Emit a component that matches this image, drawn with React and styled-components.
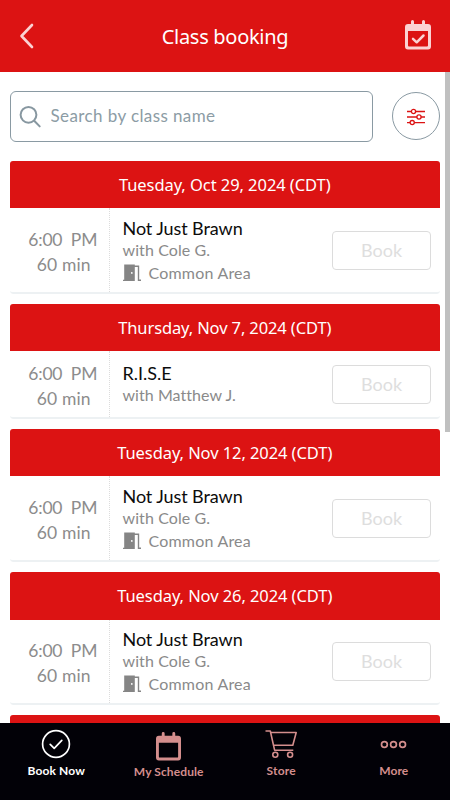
import React from "react";
import styled, { createGlobalStyle } from "styled-components";

const Global = createGlobalStyle`
  * { box-sizing: border-box; }
  html, body { margin: 0; overflow: hidden; background: #fff; }
  body { font-family: Lato, "Liberation Sans", sans-serif; }
  button, input { font-family: inherit; margin: 0; }
`;
const Screen = styled.div`
  width: 450px; height: 800px; display: flex; flex-direction: column; overflow: hidden; background: #fff;
`;
const TopBar = styled.header`
  height: 72px; flex: none; background: #dc1313; color: #fff;
  display: grid; grid-template-columns: 72px 1fr 72px; align-items: center;
`;
const Title = styled.h1`
  margin: 0; padding-top: 1px; text-align: center; font: 400 20px/28px "Noto Sans", sans-serif;
  letter-spacing: ${p => p.$track}px; white-space: nowrap;
`;
const IconButton = styled.button`
  border: 0; padding: 0; background: none; color: #fbd2d3; height: 72px; display: flex; align-items: center;
  justify-content: ${p => p.$end ? "flex-end" : "flex-start"};
  padding-left: ${p => p.$end ? 0 : 19}px; padding-right: ${p => p.$end ? 19 : 0}px; padding-bottom: ${p => p.$end ? 2 : 0}px;
`;
const Main = styled.main`
  flex: 1; min-height: 0; display: flex; overflow: hidden;
`;
const Content = styled.div`
  flex: none; width: 445px; padding: 19px 5px 0 9.5px;
`;
const ScrollThumb = styled.div`
  width: 5px; height: 360px; background: #c0c0c0;
`;
const SearchRow = styled.div`
  display: flex; align-items: center; justify-content: space-between; height: 51px; margin-bottom: 18.7px; width: 430.9px;
`;
const SearchBox = styled.label`
  width: 363.4px; height: 51px; border: 1px solid #8a9aa3; border-radius: 6px; display: flex; align-items: center;
  padding-left: 8px; color: #8797a0; gap: 9px;
`;
const SearchInput = styled.input`
  border: 0; outline: 0; background: none; padding: 0 0 2px; width: 280px; height: 30px; font-size: 17px; letter-spacing: 0.4px;
  &::placeholder { color: #8c9ca5; opacity: 1; }
`;
const FilterButton = styled.button`
  width: 48px; height: 48px; border-radius: 50%; border: 1px solid #8a9aa3; background: #fff; padding: 1px 0 0;
  display: flex; align-items: center; justify-content: center; color: #dc1313; margin-bottom: 1px;
`;
const Card = styled.section`
  width: 430.5px; margin-bottom: 10px; border-radius: 3px; overflow: hidden;
`;
const DateBar = styled.h2`
  margin: 0; height: 47.5px; background: #dc1313; color: #fff; text-align: center;
  font: 400 16.5px/48px "Noto Sans", sans-serif; letter-spacing: ${p => p.$track}px; white-space: nowrap;
`;
const ClassRow = styled.div`
  height: ${p => p.$short ? 67.3 : 85.8}px; display: flex; border-bottom: 2px solid #edf1f3; border-radius: 0 0 3px 3px;
`;
const TimeCell = styled.div`
  width: 100.5px; flex: none; border-right: 1px dotted #dcdcdc; display: flex; flex-direction: column;
  justify-content: center; padding-left: 7px; color: #8c8c8c; font-size: 17.5px; line-height: 25.5px;
  text-align: center; white-space: pre; padding-top: 4px;
`;
const Time = styled.span`letter-spacing: -0.2px;`;
const Duration = styled.span`letter-spacing: 0.15px; padding-left: 2px;`;
const Details = styled.div`
  flex: 1; padding-left: 12.5px; display: flex; flex-direction: column; justify-content: center; white-space: nowrap; padding-top: 1px;
`;
const ClassName = styled.div`
  color: #0c0c0c; font-size: 18px; line-height: 22px; letter-spacing: ${p => p.$track}px;
`;
const Meta = styled.div`
  color: #8a8a8a; font-size: 16px; line-height: 22.5px; display: flex; align-items: center; gap: 8px; letter-spacing: ${p => p.$track}px;
`;
const BookCell = styled.div`
  width: 108px; flex: none; display: flex; align-items: center;
`;
const BookButton = styled.button`
  width: 99px; height: 39px; border: 1px solid #dcdcdc; border-radius: 4px; background: #fff;
  color: #dedede; padding: 0; font-size: 18px; letter-spacing: 0;
`;
const TabBar = styled.nav`
  height: 77px; flex: none; background: #020107; display: grid; grid-template-columns: repeat(4, 1fr);
`;
const Tab = styled.button`
  border: 0; background: none; padding: 0; color: ${p => p.$active ? "#fff" : "#d48e8d"};
  display: flex; flex-direction: column; align-items: center; padding-top: ${p => p.$drop ? 6 : 5}px;
  font-size: 12px; font-weight: 700; line-height: 17px; letter-spacing: ${p => p.$track}px; white-space: nowrap;
`;
const TabIcon = styled.span`
  height: 34px; display: flex; align-items: center; justify-content: center; padding-bottom: ${p => p.$lift || 0}px;
`;

const BackIcon = () => (
  <svg width="16" height="26" viewBox="0 0 16 26" fill="none" stroke="currentColor" strokeWidth="2.6" strokeLinecap="round" strokeLinejoin="round">
    <path d="M13 2 2.5 13 13 24" />
  </svg>
);
const CalendarIcon = ({ check, width = 26, height = 30 }) => (
  <svg width={width} height={height} viewBox="0 0 26 30" preserveAspectRatio="none">
    <path fill="currentColor" fillRule="evenodd" d="M6 1.5a1.5 1.5 0 0 1 3 0V4h8V1.5a1.5 1.5 0 0 1 3 0V4h3a3 3 0 0 1 3 3v19.5a3 3 0 0 1-3 3H3a3 3 0 0 1-3-3V7a3 3 0 0 1 3-3h3ZM3 11v14.5q0 1 1 1h18q1 0 1-1V11Z" />
    {check && <path d="m8 18.8 3.7 3.5 6.8-6.8" fill="none" stroke="currentColor" strokeWidth="2.5" strokeLinecap="round" strokeLinejoin="round" />}
  </svg>
);
const SearchIcon = () => (
  <svg width="23" height="23" viewBox="0 0 23 23" fill="none" stroke="currentColor" strokeWidth="2" strokeLinecap="round">
    <circle cx="9.5" cy="9.8" r="7.9" /><path d="m15.2 15.7 5.5 5.7" />
  </svg>
);
const FilterIcon = () => (
  <svg width="18" height="18" viewBox="0 0 18 18" stroke="currentColor" strokeWidth="1.3" fill="#fff">
    <path d="M0 3.5h18M0 9h18M0 14.6h18" />
    <circle cx="6.5" cy="3.5" r="2.1" /><circle cx="12" cy="9" r="2.1" /><circle cx="5.2" cy="14.6" r="2.1" />
  </svg>
);
const DoorIcon = () => (
  <svg width="18" height="18" viewBox="0 0 18 18">
    <path fill="#858585" fillRule="evenodd" d="M1.2 .6H11.8V17H0v-1.2h1.2ZM8.8 8a.9.9 0 1 0 0 1.8.9.9 0 0 0 0-1.8Z" />
    <path d="M11 2.2h4.5v14.1H18" fill="none" stroke="#858585" strokeWidth="1.4" />
  </svg>
);
const CheckIcon = () => (
  <svg width="30" height="30" viewBox="0 0 30 30" fill="none" stroke="currentColor" strokeWidth="1.7" strokeLinecap="round" strokeLinejoin="round">
    <circle cx="15" cy="15" r="13.4" /><path d="m9.2 15.3 4 4 7.6-8" />
  </svg>
);
const CartIcon = () => (
  <svg width="32" height="30" viewBox="0 0 32 30" fill="none" stroke="currentColor" strokeWidth="1.6" strokeLinejoin="round">
    <path d="M.5 2h4.8l4.3 19.2h18.7M5.8 3.5h25.4l-3.4 12.7H8.6" />
    <circle cx="10.3" cy="25.8" r="2.5" /><circle cx="25.1" cy="25.8" r="2.5" />
  </svg>
);
const MoreIcon = () => (
  <svg width="27" height="9" viewBox="0 0 27 9" fill="none" stroke="currentColor" strokeWidth="1.7">
    <circle cx="4.4" cy="4.5" r="2.9" /><circle cx="13.5" cy="4.5" r="2.9" /><circle cx="22.6" cy="4.5" r="2.9" />
  </svg>
);

const brawn = { name: "Not Just Brawn", nameTrack: -0.08, coach: "with Cole G.", coachTrack: 0.1, room: "Common Area" };
const classes = [
  { date: "Tuesday, Oct 29, 2024 (CDT)", track: -0.06, ...brawn },
  { date: "Thursday, Nov 7, 2024 (CDT)", track: -0.12, name: "R.I.S.E", nameTrack: 0, coach: "with Matthew J.", coachTrack: 0.05 },
  { date: "Tuesday, Nov 12, 2024 (CDT)", track: -0.08, ...brawn },
  { date: "Tuesday, Nov 26, 2024 (CDT)", track: -0.08, ...brawn },
];

export default function App() {
  return (
    <Screen>
      <Global />
      <TopBar>
        <IconButton aria-label="Back"><BackIcon /></IconButton>
        <Title $track={-0.3}>Class booking</Title>
        <IconButton $end aria-label="Calendar"><CalendarIcon check /></IconButton>
      </TopBar>
      <Main>
        <Content>
          <SearchRow>
            <SearchBox><SearchIcon /><SearchInput placeholder="Search by class name" /></SearchBox>
            <FilterButton aria-label="Filters"><FilterIcon /></FilterButton>
          </SearchRow>
          {classes.map(c => (
            <Card key={c.date}>
              <DateBar $track={c.track}>{c.date}</DateBar>
              <ClassRow $short={!c.room}>
                <TimeCell><Time>6:00  PM</Time><Duration>60 min</Duration></TimeCell>
                <Details>
                  <ClassName $track={c.nameTrack}>{c.name}</ClassName>
                  <Meta $track={c.coachTrack}>{c.coach}</Meta>
                  {c.room && <Meta $track={0.2}><DoorIcon />{c.room}</Meta>}
                </Details>
                <BookCell><BookButton>Book</BookButton></BookCell>
              </ClassRow>
            </Card>
          ))}
          <Card><DateBar /></Card>
        </Content>
        <ScrollThumb />
      </Main>
      <TabBar>
        <Tab $active $track={0.15}><TabIcon $lift={2}><CheckIcon /></TabIcon>Book Now</Tab>
        <Tab $drop $track={0.1}><TabIcon><CalendarIcon width={25} height={29} /></TabIcon>My Schedule</Tab>
        <Tab $track={0.2}><TabIcon $lift={2}><CartIcon /></TabIcon>Store</Tab>
        <Tab $track={0.1}><TabIcon $lift={2}><MoreIcon /></TabIcon>More</Tab>
      </TabBar>
    </Screen>
  );
}
